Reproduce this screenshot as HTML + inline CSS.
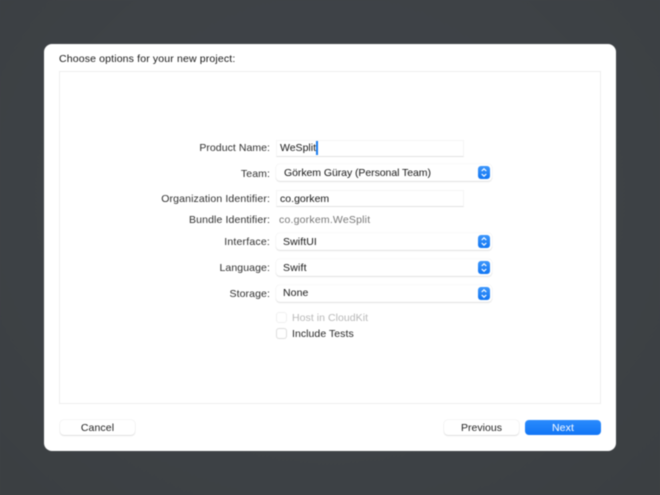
<!DOCTYPE html>
<html><head><meta charset="utf-8">
<style>
html,body{margin:0;padding:0;width:660px;height:495px;overflow:hidden;background:#3f4347;font-family:"Liberation Sans",sans-serif;}
div{position:absolute;box-sizing:border-box;}
#w{left:0;top:0;width:660px;height:495px;filter:blur(.4px);background:radial-gradient(ellipse at 50% 40%,#40444a 0%,#3e4246 60%,#3b3f42 100%);}
.dlg{left:44px;top:44px;width:572px;height:407px;background:#fff;border-radius:8px;}
.box{left:59px;top:71px;width:542px;height:333px;background:#fff;border:1px solid #eeeeee;}
.t{font-size:10.5px;line-height:14px;height:14px;white-space:nowrap;color:#161616;letter-spacing:.02px;}
.l{right:390px;text-align:right;color:#2e2e2e;letter-spacing:.1px;}
.f{left:276px;width:188px;height:17px;background:#fff;border:1px solid #f5f5f5;border-bottom:1px solid #e2e2e2;}
.p{left:276px;width:216px;height:17px;background:#fff;border-radius:4px;box-shadow:0 0 1px rgba(0,0,0,.16),0 1px 1px rgba(0,0,0,.1);}
.a{left:478px;width:12px;height:13px;background:linear-gradient(#3d96fb,#1176f3);border-radius:3px;}
.a svg{position:absolute;left:0;top:0;}
.c{left:276px;width:11px;height:11px;background:#fff;border:1px solid #dcdcdc;border-radius:3px;}
.b{top:420px;height:15px;background:#fff;border-radius:4px;box-shadow:0 0 1px rgba(0,0,0,.2),0 1px 1px rgba(0,0,0,.1);font-size:10.5px;line-height:15px;text-align:center;color:#222;letter-spacing:.1px;}
</style></head><body>
<div id="w">
<div class="dlg"></div>
<div class="t" style="left:59px;top:52px;letter-spacing:.15px;">Choose options for your new project:</div>
<div class="box"></div>

<div class="t l" style="top:141px;letter-spacing:.05px">Product Name:</div>
<div class="f" style="top:140px"></div>
<div class="t" style="left:280px;top:141px;letter-spacing:0">WeSplit</div>
<div style="left:316px;top:141px;width:1.5px;height:14px;background:#1a7cf0"></div>

<div class="t l" style="top:167px">Team:</div>
<div class="p" style="top:164px"></div>
<div class="t" style="left:284px;top:166px;letter-spacing:-.06px">Görkem Güray (Personal Team)</div>
<div class="a" style="top:166px"><svg width="12" height="13" viewBox="0 0 12 13" fill="none" stroke="#fff" stroke-width="1.2"><path d="M3.7 5 6 2.8 8.3 5M3.7 8 6 10.2 8.3 8"/></svg></div>

<div class="t l" style="top:192px;letter-spacing:.13px">Organization Identifier:</div>
<div class="f" style="top:190px"></div>
<div class="t" style="left:280px;top:192px">co.gorkem</div>

<div class="t l" style="top:213px;letter-spacing:.12px">Bundle Identifier:</div>
<div class="t" style="left:279px;top:213px;color:#777;letter-spacing:.2px">co.gorkem.WeSplit</div>

<div class="t l" style="top:235px;letter-spacing:.2px">Interface:</div>
<div class="p" style="top:233px"></div>
<div class="t" style="left:283px;top:235px;letter-spacing:.1px">SwiftUI</div>
<div class="a" style="top:235px"><svg width="12" height="13" viewBox="0 0 12 13" fill="none" stroke="#fff" stroke-width="1.2"><path d="M3.7 5 6 2.8 8.3 5M3.7 8 6 10.2 8.3 8"/></svg></div>

<div class="t l" style="top:261px">Language:</div>
<div class="p" style="top:259px"></div>
<div class="t" style="left:283px;top:261px;letter-spacing:.2px">Swift</div>
<div class="a" style="top:261px"><svg width="12" height="13" viewBox="0 0 12 13" fill="none" stroke="#fff" stroke-width="1.2"><path d="M3.7 5 6 2.8 8.3 5M3.7 8 6 10.2 8.3 8"/></svg></div>

<div class="t l" style="top:287px">Storage:</div>
<div class="p" style="top:285px"></div>
<div class="t" style="left:283px;top:286px;letter-spacing:.1px">None</div>
<div class="a" style="top:287px"><svg width="12" height="13" viewBox="0 0 12 13" fill="none" stroke="#fff" stroke-width="1.2"><path d="M3.7 5 6 2.8 8.3 5M3.7 8 6 10.2 8.3 8"/></svg></div>

<div class="c" style="top:312px;border-color:#f0f0f0"></div>
<div class="t" style="left:292px;top:311px;color:#b8b8b8;letter-spacing:.05px">Host in CloudKit</div>
<div class="c" style="top:328px"></div>
<div class="t" style="left:292px;top:327px;color:#262626;letter-spacing:.05px">Include Tests</div>

<div class="b" style="left:60px;width:75px;padding-top:1px">Cancel</div>
<div class="b" style="left:444px;width:75px;padding-top:1px;letter-spacing:.02px">Previous</div>
<div class="b" style="left:525px;width:76px;padding-top:1px;background:linear-gradient(#2a8bfd,#1175f5);color:#fff;box-shadow:none">Next</div>
</div>
</body></html>
